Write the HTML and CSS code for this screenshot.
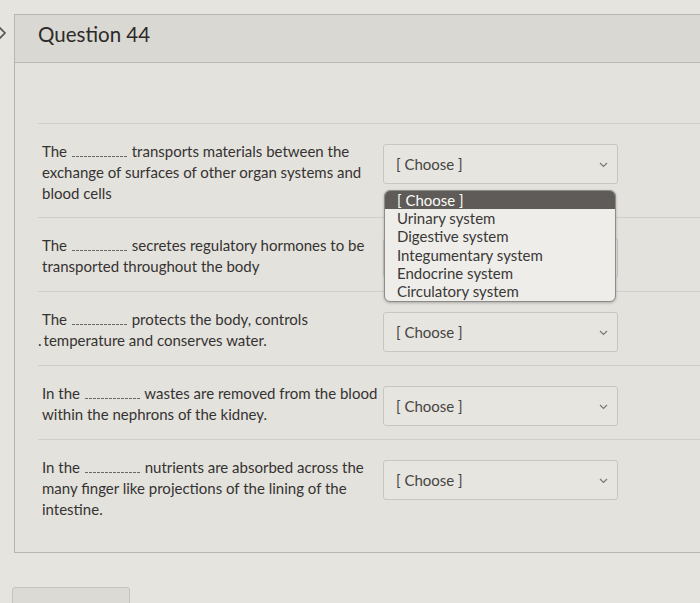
FILE: index.html
```html
<!DOCTYPE html>
<html lang="en">
<head>
<meta charset="utf-8">
<title>Question 44</title>
<link rel="stylesheet" href="styles.css">
</head>
<body>
<div class="page">
  <div class="gutter">
    <svg class="edge-arrow" width="14" height="20" viewBox="0 0 14 20"><path d="M-2 3 L5 10 L-2 17" fill="none" stroke="#555" stroke-width="1.6"/></svg>
  </div>
  <div class="main">
    <section class="card">
      <header class="card-head"><h2 class="title">Question 44</h2></header>
      <div class="card-body">
        <div class="row">
          <p class="prompt">The <span class="blank"></span> transports materials between the exchange of surfaces of other organ systems and blood cells</p>
          <div class="select-wrap">
            <div class="select"><span>[ Choose ]</span><svg class="chev" width="9" height="6" viewBox="0 0 9 6"><path d="M1 1 L4.5 4.5 L8 1" fill="none" stroke="#777" stroke-width="1.2"/></svg></div>
            <ul class="menu">
              <li class="on">[ Choose ]</li>
              <li>Urinary system</li>
              <li>Digestive system</li>
              <li>Integumentary system</li>
              <li>Endocrine system</li>
              <li>Circulatory system</li>
            </ul>
          </div>
        </div>
        <div class="row">
          <p class="prompt">The <span class="blank"></span> secretes regulatory hormones to be transported throughout the body</p>
          <div class="select-wrap">
            <div class="select"><span>[ Choose ]</span><svg class="chev" width="9" height="6" viewBox="0 0 9 6"><path d="M1 1 L4.5 4.5 L8 1" fill="none" stroke="#777" stroke-width="1.2"/></svg></div>
          </div>
        </div>
        <div class="row">
          <p class="prompt">The <span class="blank"></span> protects the body, controls<br><span class="dot">.</span>temperature and conserves water.</p>
          <div class="select-wrap">
            <div class="select"><span>[ Choose ]</span><svg class="chev" width="9" height="6" viewBox="0 0 9 6"><path d="M1 1 L4.5 4.5 L8 1" fill="none" stroke="#777" stroke-width="1.2"/></svg></div>
          </div>
        </div>
        <div class="row">
          <p class="prompt">In the <span class="blank"></span> wastes are removed from the blood within the nephrons of the kidney.</p>
          <div class="select-wrap">
            <div class="select"><span>[ Choose ]</span><svg class="chev" width="9" height="6" viewBox="0 0 9 6"><path d="M1 1 L4.5 4.5 L8 1" fill="none" stroke="#777" stroke-width="1.2"/></svg></div>
          </div>
        </div>
        <div class="row last">
          <p class="prompt">In the <span class="blank"></span> nutrients are absorbed across the many finger like projections of the lining of the intestine.</p>
          <div class="select-wrap">
            <div class="select"><span>[ Choose ]</span><svg class="chev" width="9" height="6" viewBox="0 0 9 6"><path d="M1 1 L4.5 4.5 L8 1" fill="none" stroke="#777" stroke-width="1.2"/></svg></div>
          </div>
        </div>
      </div>
    </section>
    <div class="nav"><button class="btn">Previous</button></div>
  </div>
</div>
</body>
</html>
```
FILE: styles.css
```css
html, body {
  margin: 0;
  padding: 0;
  height: 603px;
  overflow: hidden;
  background: #e6e4df;
  font-family: Lato, "Open Sans", sans-serif;
  color: #333130;
}
.page {
  display: flex;
  padding-top: 14px;
}
.gutter {
  width: 14px;
  flex: none;
}
.edge-arrow {
  display: block;
  margin-top: 9px;
  overflow: visible;
}
.main {
  flex: none;
  width: 700px;
}
.card {
  border: 1px solid #b7b5b0;
  border-right: none;
  background: #e4e2dd;
}
.card-head {
  box-sizing: border-box;
  height: 48px;
  background: #dad8d3;
  border-bottom: 1px solid #bcbab5;
  display: flex;
  align-items: center;
  padding: 0 0 10px 23px;
}
.title {
  margin: 0;
  font-size: 20.5px;
  font-weight: 400;
  color: #2c2a29;
}
.card-body {
  padding-top: 60px;
  padding-left: 23px;
}
.card-body .row:first-child {
  border-top: 1px solid #d0cec9;
}
.row {
  display: flex;
  align-items: flex-start;
  padding: 17px 0 13px 4px;
  border-bottom: 1px solid #d0cec9;
}
.row.last {
  border-bottom: none;
  padding-bottom: 32px;
}
.prompt {
  margin: 0;
  width: 338px;
  flex: none;
  font-size: 15px;
  line-height: 21px;
  color: #353332;
}
.dot {
  margin-left: -4px;
  margin-right: 2px;
}
.blank {
  display: inline-block;
  width: 55px;
  height: 1px;
  background: repeating-linear-gradient(90deg, #6b6966 0 3px, transparent 3px 4px);
  vertical-align: baseline;
  margin: 0 1px;
}
.select-wrap {
  position: relative;
  margin-top: 3px;
  margin-left: 3px;
}
.select {
  box-sizing: border-box;
  width: 235px;
  height: 40px;
  border: 1px solid #c8c6c1;
  border-radius: 3px;
  background: #e7e5e0;
  display: flex;
  align-items: center;
  justify-content: space-between;
  padding: 0 9px 0 12px;
  font-size: 15px;
  color: #464442;
}
.chev {
  display: block;
  margin-top: 2px;
}
.menu {
  position: absolute;
  z-index: 2;
  top: 46px;
  left: 1px;
  width: 232px;
  box-sizing: border-box;
  margin: 0;
  padding: 0 0 1px;
  list-style: none;
  background: #eeede9;
  border: 1px solid #8e8c89;
  border-radius: 6px;
  box-shadow: 0 1px 3px rgba(0,0,0,0.25);
  overflow: hidden;
  font-size: 15px;
  line-height: 18.2px;
  color: #3a3837;
}
.menu li {
  padding-left: 12px;
}
.menu li.on {
  background: #5f5b59;
  color: #fbfaf8;
}
.nav {
  padding: 34px 0 0 0;
  margin-left: -2px;
}
.btn {
  width: 118px;
  height: 36px;
  border: 1px solid #c6c4bf;
  border-radius: 3px;
  background: #dcdad5;
  font-family: Lato, sans-serif;
  font-size: 15px;
  color: #3a3837;
  padding-top: 8px;
}
```
